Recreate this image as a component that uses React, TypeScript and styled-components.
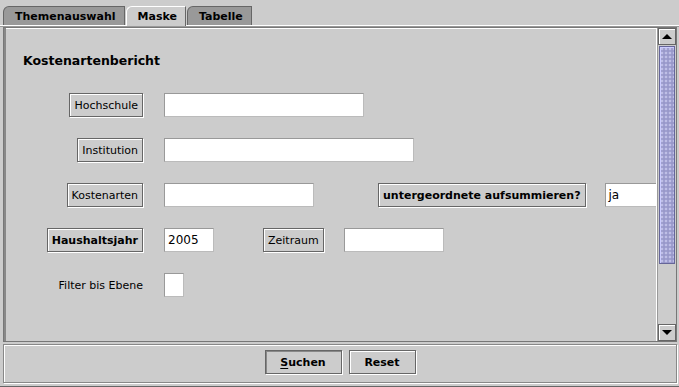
import * as React from "react"
import styled, { createGlobalStyle } from "styled-components"

const Global = createGlobalStyle`
  html, body {
    margin: 0;
    padding: 0;
    background: #cccccc;
  }
  body {
    font-family: "DejaVu Sans", "Liberation Sans", sans-serif;
    font-size: 11px;
    color: #000000;
  }
`

const Frame = styled.div`
  width: 679px;
  height: 387px;
  display: flex;
  flex-direction: column;
  background: #cccccc;
  overflow: hidden;
`

const TabBar = styled.div`
  height: 25px;
  display: flex;
  align-items: flex-end;
  padding-left: 3px;
  box-sizing: border-box;
`

const Tab = styled.div<{ selected?: boolean }>`
  position: relative;
  height: ${({ selected }) => (selected ? "20px" : "19px")};
  padding: 0 8px 0 11px;
  margin-right: 1px;
  display: flex;
  align-items: center;
  font-weight: bold;
  font-size: 11px;
  box-sizing: border-box;
  background: ${({ selected }) => (selected ? "#cccccc" : "#999999")};
  border-top: 1px solid ${({ selected }) => (selected ? "#ffffff" : "#666666")};
  border-left: 1px solid ${({ selected }) => (selected ? "#ffffff" : "#666666")};
  border-right: 1px solid #666666;
  border-top-left-radius: 6px 6px;
  margin-bottom: ${({ selected }) => (selected ? "-1px" : "0")};
  z-index: ${({ selected }) => (selected ? 2 : 1)};
`

const TabContent = styled.div`
  flex: 1;
  display: flex;
  flex-direction: column;
  border-top: 1px solid #ffffff;
  box-shadow: inset 0 1px 0 #999999;
  padding: 1px 1px 3px 2px;
  min-height: 0;
  border-bottom: 1px solid #666666;
`

const ScrollPane = styled.div`
  height: 315px;
  display: flex;
  border: 1px solid #777777;
  box-shadow: inset 1px 1px 0 #ffffff;
  background: #cccccc;
  box-sizing: border-box;
  margin-left: 1px;
  margin-right: 1px;
`

const Viewport = styled.div`
  flex: 1;
  overflow: hidden;
  padding: 25px 0 0 2px;
  border-right: 1px solid #ffffff;
  box-shadow: inset 2px 0 0 #888888;
`

const Heading = styled.div`
  font-size: 12.5px;
  font-weight: bold;
  line-height: 16px;
  padding-left: 17px;
  margin-bottom: 24px;
  color: #000;
`

const Form = styled.div`
  display: flex;
  flex-direction: column;
  gap: 21px;
`

const Row = styled.div`
  display: flex;
  align-items: center;
  height: 24px;
  white-space: nowrap;
`

const LabelCell = styled.div`
  width: 137px;
  flex: none;
  display: flex;
  justify-content: flex-end;
  margin-right: 21px;
`

const LabelButton = styled.div<{ bold?: boolean }>`
  height: 24px;
  box-sizing: border-box;
  padding: 0 4px;
  display: flex;
  align-items: center;
  font-size: 11px;
  font-weight: ${({ bold }) => (bold ? "bold" : "normal")};
  background: #cccccc;
  border: 1px solid #666666;
  box-shadow: inset 1px 1px 0 #ffffff, 1px 1px 0 #ffffff;
  flex: none;
`

const PlainLabel = styled.div`
  font-size: 11px;
`

const Field = styled.div<{ w: number; ml?: number }>`
  width: ${({ w }) => w}px;
  height: 24px;
  margin-left: ${({ ml }) => ml ?? 0}px;
  box-sizing: border-box;
  background: #ffffff;
  border: 1px solid #999999;
  border-right-color: #bbbbbb;
  border-bottom-color: #bbbbbb;
  display: flex;
  align-items: center;
  padding-left: 3px;
  font-size: 12px;
  flex: none;
`

const Spacer = styled.div<{ w: number }>`
  width: ${({ w }) => w}px;
  flex: none;
`

const ScrollBar = styled.div`
  width: 18px;
  flex: none;
  display: flex;
  flex-direction: column;
  background: #cccccc;
  border-left: 1px solid #999999;
`

const ArrowButton = styled.div`
  height: 17px;
  box-sizing: border-box;
  border: 1px solid #666666;
  box-shadow: inset 1px 1px 0 #ffffff;
  display: flex;
  align-items: center;
  justify-content: center;
  background: #cccccc;
`

const Arrow = styled.div<{ down?: boolean }>`
  width: 0;
  height: 0;
  border-left: 5px solid transparent;
  border-right: 5px solid transparent;
  ${({ down }) =>
    down ? "border-top: 5px solid #000;" : "border-bottom: 5px solid #000;"}
`

const Track = styled.div`
  flex: 1;
  display: flex;
  flex-direction: column;
  padding: 1px 1px 0 1px;
`

const Thumb = styled.div`
  height: 218px;
  box-sizing: border-box;
  border: 1px solid #666699;
  box-shadow: inset 1px 1px 0 #ccccff;
  background-color: #9f9fd0;
  background-image: radial-gradient(circle, #e0e0ff 0.55px, transparent 0.85px),
    radial-gradient(circle, #6a6a9c 0.45px, transparent 0.75px);
  background-size: 4px 4px, 4px 4px;
  background-position: 0 0, 2px 2px;
`

const ButtonBar = styled.div`
  flex: 1;
  margin-top: 2px;
  display: flex;
  justify-content: center;
  align-items: flex-start;
  gap: 7px;
  padding-top: 5px;
  border: 1px solid #888888;
  box-shadow: inset 1px 1px 0 #ffffff, 1px 1px 0 #ffffff;
  margin-left: 1px;
  margin-right: 1px;
`

const ActionButton = styled.button<{ focused?: boolean }>`
  font-family: "DejaVu Sans", "Liberation Sans", sans-serif;
  font-size: 11px;
  font-weight: bold;
  height: 24px;
  width: ${({ focused }) => (focused ? "77px" : "67px")};
  background: #cccccc;
  color: #000;
  padding: 0;
  border: 1px solid #666666;
  box-shadow: ${({ focused }) =>
    focused
      ? "inset 1px 1px 0 #888888, 1px 1px 0 #ffffff"
      : "inset 1px 1px 0 #ffffff, 1px 1px 0 #ffffff"};
  u {
    text-decoration: underline;
    text-underline-offset: 2px;
  }
`

export default function App() {
  return (
    <Frame>
      <Global />
      <TabBar>
        <Tab>Themenauswahl</Tab>
        <Tab selected>Maske</Tab>
        <Tab>Tabelle</Tab>
      </TabBar>
      <TabContent>
        <ScrollPane>
          <Viewport>
            <Heading>Kostenartenbericht</Heading>
            <Form>
              <Row>
                <LabelCell>
                  <LabelButton>Hochschule</LabelButton>
                </LabelCell>
                <Field w={200} />
              </Row>
              <Row>
                <LabelCell>
                  <LabelButton>Institution</LabelButton>
                </LabelCell>
                <Field w={250} />
              </Row>
              <Row>
                <LabelCell>
                  <LabelButton>Kostenarten</LabelButton>
                </LabelCell>
                <Field w={150} />
                <Spacer w={64} />
                <LabelButton bold>untergeordnete aufsummieren?</LabelButton>
                <Field w={70} ml={19}>ja</Field>
              </Row>
              <Row>
                <LabelCell>
                  <LabelButton bold>Haushaltsjahr</LabelButton>
                </LabelCell>
                <Field w={50}>2005</Field>
                <Spacer w={49} />
                <LabelButton>Zeitraum</LabelButton>
                <Field w={100} ml={20} />
              </Row>
              <Row>
                <LabelCell>
                  <PlainLabel>Filter bis Ebene</PlainLabel>
                </LabelCell>
                <Field w={20} />
              </Row>
            </Form>
          </Viewport>
          <ScrollBar>
            <ArrowButton>
              <Arrow />
            </ArrowButton>
            <Track>
              <Thumb />
            </Track>
            <ArrowButton>
              <Arrow down />
            </ArrowButton>
          </ScrollBar>
        </ScrollPane>
        <ButtonBar>
          <ActionButton focused>
            <u>S</u>uchen
          </ActionButton>
          <ActionButton>Reset</ActionButton>
        </ButtonBar>
      </TabContent>
    </Frame>
  )
}
